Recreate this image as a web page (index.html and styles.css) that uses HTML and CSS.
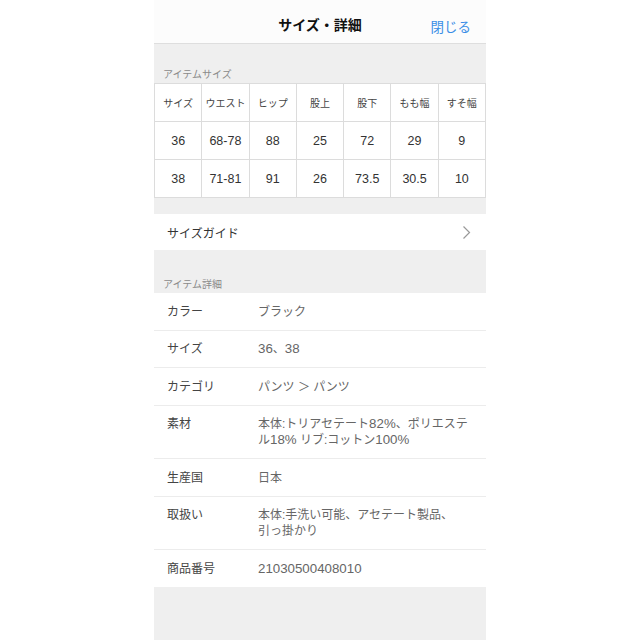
FILE: index.html
```html
<!DOCTYPE html>
<html lang="ja">
<head>
<meta charset="utf-8">
<link rel="stylesheet" href="styles.css">
</head>
<body>
<div class="screen">
  <header class="topbar">
    <div class="title">サイズ・詳細</div>
    <div class="close">閉じる</div>
  </header>

  <div class="section-label">アイテムサイズ</div>
  <table class="size-table">
    <tr class="head"><td>サイズ</td><td>ウエスト</td><td>ヒップ</td><td>股上</td><td>股下</td><td>もも幅</td><td>すそ幅</td></tr>
    <tr><td>36</td><td>68-78</td><td>88</td><td>25</td><td>72</td><td>29</td><td>9</td></tr>
    <tr><td>38</td><td>71-81</td><td>91</td><td>26</td><td>73.5</td><td>30.5</td><td>10</td></tr>
  </table>

  <div class="spacer"></div>
  <div class="guide-row">
    <span>サイズガイド</span>
    <svg class="chev" width="9" height="15" viewBox="0 0 9 15"><path d="M1.5 1.5 L7.5 7.5 L1.5 13.5" fill="none" stroke="#999" stroke-width="1.2"/></svg>
  </div>

  <div class="section-label tall">アイテム詳細</div>
  <div class="details">
    <div class="row"><div class="k">カラー</div><div class="v">ブラック</div></div>
    <div class="row"><div class="k">サイズ</div><div class="v"><span class="n">36</span>、<span class="n">38</span></div></div>
    <div class="row"><div class="k">カテゴリ</div><div class="v">パンツ ＞ パンツ</div></div>
    <div class="row"><div class="k">素材</div><div class="v">本体:トリアセテート<span class="n">82%</span>、ポリエステ<br>ル<span class="n">18%</span> リブ:コットン<span class="n">100%</span></div></div>
    <div class="row"><div class="k">生産国</div><div class="v">日本</div></div>
    <div class="row"><div class="k">取扱い</div><div class="v">本体:手洗い可能、アセテート製品、<br>引っ掛かり</div></div>
    <div class="row"><div class="k">商品番号</div><div class="v"><span class="n">21030500408010</span></div></div>
  </div>
  <div class="bottom"></div>
</div>
</body>
</html>
```
FILE: styles.css
```css
html, body {
  margin: 0;
  padding: 0;
  background: #ffffff;
}
body {
  font-family: "Liberation Sans", "Noto Sans CJK JP", sans-serif;
  color: #333;
}
.screen {
  width: 332px;
  margin-left: 154px;
  height: 640px;
  background: #efefef;
  display: flex;
  flex-direction: column;
}
.topbar {
  height: 43px;
  background: #fcfcfc;
  border-bottom: 1px solid #dedede;
  position: relative;
  display: flex;
  align-items: center;
  justify-content: center;
  flex-shrink: 0;
}
.title {
  font-size: 14px;
  font-weight: bold;
  color: #111;
  padding-top: 4px;
}
.close {
  position: absolute;
  right: 15px;
  top: 16px;
  font-size: 13.5px;
  color: #3a8ee6;
}
.section-label {
  height: 39px;
  box-sizing: border-box;
  display: flex;
  align-items: flex-end;
  padding: 0 0 2px 9px;
  font-size: 10px;
  color: #8a8a8a;
  flex-shrink: 0;
}
.section-label.tall {
  height: 43px;
}
.size-table {
  width: 332px;
  border-collapse: collapse;
  table-layout: fixed;
  background: #fff;
  flex-shrink: 0;
}
.size-table td {
  border: 1px solid #dcdcdc;
  height: 37px;
  padding: 0;
  text-align: center;
  font-size: 12.5px;
  color: #333;
}
.size-table tr.head td {
  font-size: 10px;
  color: #444;
}
.spacer {
  height: 16px;
  flex-shrink: 0;
}
.guide-row {
  height: 36px;
  background: #fff;
  display: flex;
  align-items: center;
  justify-content: space-between;
  padding: 0 15px 0 13px;
  font-size: 12px;
  color: #333;
  flex-shrink: 0;
}
.details {
  background: #fff;
  flex-shrink: 0;
}
.row {
  display: flex;
  padding: 10.5px 0 10px;
  border-bottom: 1px solid #ececec;
  font-size: 12px;
  line-height: 16px;
}
.row:last-child {
  border-bottom: none;
}
.k {
  width: 104px;
  padding-left: 13px;
  box-sizing: border-box;
  color: #444;
  flex-shrink: 0;
}
.v {
  color: #666;
  white-space: nowrap;
}
.n {
  font-size: 13.3px;
}
.bottom {
  flex: 1;
}
```
